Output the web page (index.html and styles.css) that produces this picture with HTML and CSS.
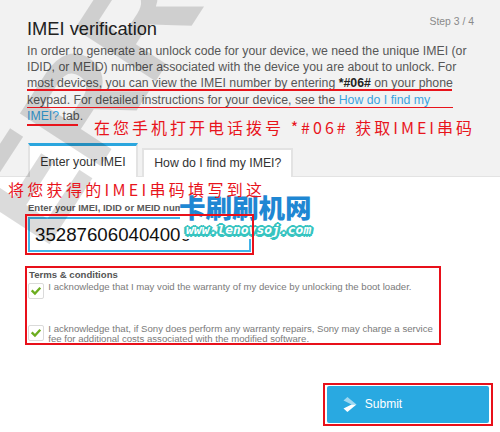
FILE: index.html
```html
<!DOCTYPE html>
<html lang="en">
<head>
<meta charset="utf-8">
<title>IMEI verification</title>
<link rel="stylesheet" href="styles.css">
</head>
<body>
<div class="page">
  <section class="intro">
    <div class="head">
      <h1 class="title">IMEI verification</h1>
      <span class="step">Step 3 / 4</span>
    </div>
    <div class="desc">
      <div class="desc-line">In order to generate an unlock code for your device, we need the unique IMEI (or</div>
      <div class="desc-line">IDID, or MEID) number associated with the device you are about to unlock. For</div>
      <div class="desc-line">most devices, you can view the IMEI number by entering <b class="code">*#06#</b> on your phone</div>
      <div class="desc-line">keypad. For detailed instructions for your device, see the <span class="link">How do I find my</span></div>
      <div class="desc-line desc-last"><span><span class="link">IMEI?</span> tab.</span><span class="cn-note">在您手机打开电话拨号 *#06# 获取IMEI串码</span></div>
    </div>
    <div class="tabs">
      <div class="tab tab-active">Enter your IMEI</div>
      <div class="tab">How do I find my IMEI?</div>
    </div>
  </section>

  <section class="panel">
    <div class="cn-note cn-note-2">将您获得的IMEI串码填写到这</div>
    <div class="form">
      <div class="field-label">Enter your IMEI, IDID or MEID number</div>
      <div class="imei-mark">
        <div class="imei-input">352876060404000</div>
      </div>
      <div class="terms">
        <div class="terms-title">Terms &amp; conditions</div>
        <div class="check-row">
          <span class="checkbox"><svg width="16" height="16" viewBox="0 0 16 16"><path d="M4 8.2 L6.8 11 L12 5.2" fill="none" stroke="#6cad1f" stroke-width="2.6" stroke-linecap="square"/></svg></span>
          <span class="check-text">I acknowledge that I may void the warranty of my device by unlocking the boot loader.</span>
        </div>
        <div class="check-row check-row-2">
          <span class="checkbox"><svg width="16" height="16" viewBox="0 0 16 16"><path d="M4 8.2 L6.8 11 L12 5.2" fill="none" stroke="#6cad1f" stroke-width="2.6" stroke-linecap="square"/></svg></span>
          <span class="check-text">I acknowledge that, if Sony does perform any warranty repairs, Sony may charge a service<br>fee for additional costs associated with the modified software.</span>
        </div>
      </div>
      <div class="actions">
        <div class="submit-mark">
          <button class="submit" type="button">
            <svg width="14" height="15" viewBox="0 0 14 15"><polygon points="0.5,3.6 4.4,0 13.5,7.5 8.6,7.5" fill="#ffffff" fill-opacity="0.55"/><polygon points="8.6,7.5 13.5,7.5 4.4,15 0.5,11.4" fill="#ffffff"/></svg>
            <span>Submit</span>
          </button>
        </div>
      </div>
    </div>
  </section>

  <div class="anno-line anno-1"></div>
  <div class="anno-line anno-2"></div>
  <div class="anno-line anno-3"></div>

  <div class="logo">
    <div class="logo-cn">卡刷刷机网</div>
    <div class="logo-url">www.lenovsoj.com</div>
  </div>

  <div class="watermark">ERR</div>
</div>
</body>
</html>
```

FILE: styles.css
```css
html, body {
  margin: 0;
  padding: 0;
}

body {
  width: 500px;
  height: 432px;
  overflow: hidden;
  background: #ffffff;
  font-family: "Liberation Sans", Arial, sans-serif;
}

.page {
  position: relative;
  width: 500px;
  height: 432px;
  overflow: hidden;
}

/* ---------- intro (grey) ---------- */
.intro {
  background: #f2f2f2;
  padding: 16px 26px 0 27px;
  border-bottom: 1px solid #e3e3e3;
}

.head {
  display: flex;
  justify-content: space-between;
  align-items: flex-start;
}

.title {
  margin: 3px 0 0;
  font-size: 18.3px;
  line-height: 20px;
  font-weight: normal;
  color: #222;
}

.step {
  font-size: 10.4px;
  line-height: 12px;
  color: #8a8a8a;
}

.desc {
  margin-top: 4px;
  font-size: 12.3px;
  line-height: 16.2px;
  color: #575757;
  white-space: nowrap;
}

.desc-line {
  height: 16.2px;
}

.code {
  color: #222;
  font-weight: bold;
}

.link {
  color: #3aa3df;
}

.desc-last {
  display: flex;
  align-items: flex-start;
}

.cn-note {
  font-family: "Noto Sans CJK SC", sans-serif;
  font-size: 16px;
  line-height: 16px;
  letter-spacing: 3px;
  color: #e8141c;
  white-space: nowrap;
  position: relative;
  z-index: 5;
}

.desc-last .cn-note {
  margin: 11px 0 0 11px;
}

.tabs {
  display: flex;
  align-items: flex-end;
  gap: 4.5px;
  margin: 19.4px 0 -1px 1.3px;
  position: relative;
}

.tab {
  font-size: 12.3px;
  line-height: 15px;
  color: #333;
  background: #ffffff;
  border: 2px solid #e3e3e3;
  border-bottom: none;
  padding: 6px 10px 6px;
}

.tab-active {
  border-top: 3px solid #2ba6de;
  padding-top: 8.5px;
  padding-bottom: 7px;
}

/* ---------- panel (white) ---------- */
.panel {
  padding: 4px 7.3px 0 8px;
}

.cn-note-2 {
  margin: 0;
  letter-spacing: 3.3px;
}

.form {
  margin-left: 17px;
}

.field-label {
  margin: 5.4px 0 0 3px;
  font-size: 9.5px;
  line-height: 12px;
  font-weight: bold;
  color: #5a5a5a;
  white-space: nowrap;
}

.imei-mark {
  position: relative;
  width: 229px;
  box-sizing: border-box;
  padding: 3px;
}

.imei-mark::after {
  content: "";
  position: absolute;
  inset: 0;
  border: 2px solid #e8101a;
  z-index: 4;
}

.imei-input {
  height: 35px;
  box-sizing: border-box;
  border: 2px solid #41b3e9;
  background: #fff;
  padding: 0 5px;
  font-size: 18.7px;
  line-height: 31px;
  color: #111;
  white-space: nowrap;
  overflow: hidden;
}

.terms {
  margin-top: 10.6px;
  width: 416px;
  height: 79px;
  box-sizing: border-box;
  border: 2px solid #e8101a;
  padding: 0.9px 2px 0 1.3px;
}

.terms-title {
  font-size: 9.6px;
  line-height: 11px;
  font-weight: bold;
  color: #555;
  margin-left: 0.7px;
}

.check-row {
  display: flex;
  align-items: flex-start;
  gap: 4px;
  margin-top: 2px;
}

.check-row-2 {
  margin-top: 24.8px;
}

.checkbox {
  flex: none;
  width: 16px;
  height: 16px;
  box-sizing: border-box;
  border: 1px solid #dadada;
  border-radius: 2px;
  background: #fff;
  margin-top: 1px;
  display: flex;
  align-items: center;
  justify-content: center;
}

.checkbox svg {
  display: block;
}

.check-text {
  font-size: 9.6px;
  line-height: 10.5px;
  color: #7a7a7a;
  white-space: nowrap;
}

.actions {
  display: flex;
  justify-content: flex-end;
  margin-top: 37.7px;
}

.submit-mark {
  border: 2px solid #e8101a;
  padding: 1.5px;
}

.submit {
  display: flex;
  align-items: center;
  gap: 7.6px;
  width: 162.5px;
  height: 36.5px;
  box-sizing: border-box;
  padding: 0 0 0 16.5px;
  border: none;
  border-radius: 2px;
  background: #29a9e1;
  color: #ffffff;
  font-family: "Liberation Sans", Arial, sans-serif;
  font-size: 12px;
}

.submit svg {
  display: block;
}

/* ---------- annotation overlays ---------- */
.anno-line {
  position: absolute;
  left: 27px;
  height: 1.7px;
  background: #e8141c;
  z-index: 5;
}

.anno-1 {
  top: 89.3px;
  width: 425px;
}

.anno-2 {
  top: 106.8px;
  width: 426px;
}

.anno-3 {
  top: 124.2px;
  width: 51px;
}

.logo {
  position: absolute;
  left: 180px;
  top: 194px;
  width: 134px;
  background: #ffffff;
  z-index: 3;
}

.logo-cn {
  font-family: "Noto Sans CJK SC", sans-serif;
  font-size: 26.5px;
  line-height: 25px;
  font-weight: 900;
  color: #1f87d3;
  letter-spacing: 0;
  white-space: nowrap;
  margin-left: -1px;
}

.logo-url {
  margin: 2px 0 0 6px;
  font-family: "DejaVu Sans Mono", monospace;
  font-style: italic;
  font-weight: bold;
  font-size: 13px;
  line-height: 18px;
  color: #ffffff;
  white-space: nowrap;
  text-shadow:
    1.5px 0 0 #36c4c0, -1.5px 0 0 #36c4c0, 0 1.5px 0 #36c4c0, 0 -1.5px 0 #36c4c0,
    1.5px 1.5px 0 #36c4c0, -1.5px -1.5px 0 #36c4c0, 1.5px -1.5px 0 #36c4c0, -1.5px 1.5px 0 #36c4c0,
    2.5px 0 0 #36c4c0, -2.5px 0 0 #36c4c0, 0 2.5px 0 #36c4c0, 0 -2.5px 0 #36c4c0;
}

.watermark {
  position: absolute;
  left: -63px;
  top: 32px;
  font-family: "Liberation Sans", Arial, sans-serif;
  font-weight: bold;
  font-size: 140px;
  line-height: 140px;
  color: rgba(0, 0, 0, 0.14);
  transform: rotate(-57deg);
  transform-origin: 50% 50%;
  z-index: 2;
  pointer-events: none;
  white-space: nowrap;
}
```
